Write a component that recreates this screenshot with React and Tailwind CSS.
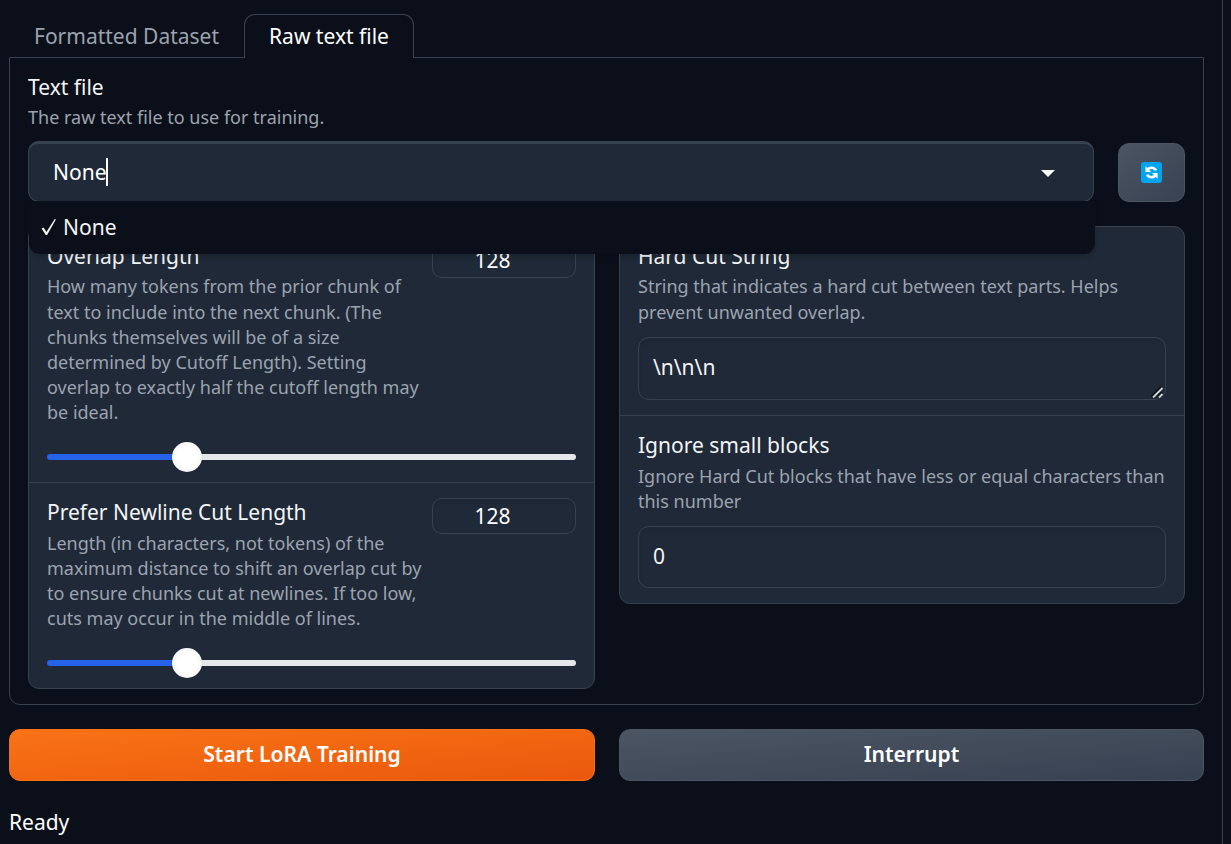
import React from "react";

function Slider() {
  return (
    <div className="flex h-[30px] w-full items-center">
      <div className="h-[6px] w-[130px] rounded-l-full bg-[#2563eb]" />
      <div className="z-10 -mx-[5px] size-[30px] shrink-0 rounded-full bg-[radial-gradient(circle,#ffffff_45%,#ececec_100%)] shadow-[0_0_1px_0px_rgba(0,0,0,0.4)]" />
      <div className="h-[6px] flex-1 rounded-r-full bg-[#e5e7eb]" />
    </div>
  );
}

function SliderBlock({ title, lines, value, className, lineClass = "" }) {
  return (
    <div className={"flex flex-col justify-between px-[18px] " + className}>
      <div className="flex justify-between">
        <div>
          <h3 className="text-[21px] leading-[30px] whitespace-nowrap text-[#f3f4f6]">{title}</h3>
          <p className="mt-[3.5px] text-[18px] leading-[25.1px] whitespace-nowrap text-[#9ca3af]">
            {lines.map((line) => (
              <span key={line} className={"block " + lineClass}>{line}</span>
            ))}
          </p>
        </div>
        <div className="mt-px h-9 w-36 shrink-0 rounded-[10px] border border-[#374151] pr-[23px] text-center text-[21px] leading-[34px] text-white shadow-[inset_0_2px_4px_rgba(0,0,0,0.05)]">
          {value}
        </div>
      </div>
      <Slider />
    </div>
  );
}

function TextBlock({ title, lines, value, resize, className, fieldClass, lineClass = "" }) {
  return (
    <div className={"flex flex-col px-[18px] " + className}>
      <h3 className="text-[21px] leading-[30px] text-[#f3f4f6]">{title}</h3>
      <p className="mt-[3.5px] text-[18px] leading-[25.1px] whitespace-nowrap text-[#9ca3af]">
        {lines.map((line) => (
          <span key={line} className={"block " + lineClass}>{line}</span>
        ))}
      </p>
      <div className={"relative mt-[12.3px] flex items-center rounded-[11px] border border-[#374151] px-[14px] text-[21px] text-[#f3f4f6] shadow-[inset_0_2px_4px_rgba(0,0,0,0.08)] " + fieldClass}>
        {value}
        {resize && (
          <svg className="absolute right-[1px] bottom-[1px]" width="13" height="12" viewBox="0 0 13 12" fill="none">
            <path d="M0.5 10.5 10.5 .5M6.5 10.5 10.5 6.5" stroke="#0b0f19" strokeWidth="1.8" />
            <path d="M2 11.5 11.5 2M8 11.5 11.5 8" stroke="#d1d5db" strokeWidth="1.8" />
          </svg>
        )}
      </div>
    </div>
  );
}

export default function App() {
  return (
    <div className="flex h-[844px] w-[1231px] overflow-hidden bg-[#0b0f19] font-['Noto_Sans',sans-serif]">
      <main className="flex w-[1223px] flex-col border-r border-[#374151] pt-[14px] pr-[18px] pl-[9px]">
        <div className="z-10 -mb-px flex h-11 text-[21px] leading-[44px]">
          <div className="w-[235px] pl-[25px] text-[#9ca3af]">Formatted Dataset</div>
          <div className="w-[170px] rounded-t-[11px] border border-b-0 border-[#374151] bg-[#0b0f19] text-center leading-[42px] text-white">
            Raw text file
          </div>
        </div>
        <section className="flex h-[648px] w-[1195px] flex-col rounded-b-[11px] border border-[#374151] px-[18px] pt-[14px]">
          <h2 className="text-[21px] leading-[30px] text-[#f3f4f6]">Text file</h2>
          <p className="mt-px text-[18px] leading-[28px] text-[#9ca3af]">The raw text file to use for training.</p>
          <div className="mt-[10px] flex h-[61px] items-end justify-between">
            <div className="relative h-[61px] w-[1066px]">
              <div className="flex h-[61px] items-center rounded-[11px] border border-t-[3px] border-[#374151] bg-[#1f2937] pr-[38px] pl-6 text-[21px] text-white">
                <span className="mt-px">None</span>
                <span className="-mt-px -ml-px h-7 w-[2px] bg-white" />
                <svg className="mt-[2px] ml-auto" width="14" height="7" viewBox="0 0 14 7">
                  <path d="M0 0H14L7 7Z" fill="#fff" />
                </svg>
              </div>
              <div className="absolute top-[60px] left-px z-20 flex h-[53px] w-[1066px] items-center rounded-b-[11px] bg-[#0b0f19] pl-3 text-[21px] text-[#f3f4f6] shadow-[0_3px_5px_rgba(0,0,0,0.15)]">
                <svg className="mr-[6px] -mt-px" width="16" height="18" viewBox="0 0 16 18" role="img" aria-label="Selected">
                  <path d="M0.6 10.6 2.6 9.6 5.4 14 13.6 1.2H15L6.1 17H4.7Z" fill="#f3f4f6" />
                </svg>
                <span className="mt-px">None</span>
              </div>
            </div>
            <button className="flex h-[59px] w-[67px] items-center justify-center rounded-[11px] border border-[#4b5563] bg-linear-to-br from-[#4b5563] to-[#374151]">
              <svg width="21" height="21" viewBox="0 0 21 21">
                <rect width="21" height="21" rx="3" fill="#00a4ef" />
                <path d="M4.5 4.2V10H10.2L8.1 7.9C10.3 6.5 12.5 7 13.5 8.8L16.2 8C14.5 4.2 9.6 3.3 6.4 6Z M16.6 16.8V11H10.9L13 13.1C10.8 14.5 8.6 14 7.6 12.2L4.9 13C6.6 16.8 11.5 17.7 14.7 15Z" fill="#fff" />
              </svg>
            </button>
          </div>
          <div className="mt-6 flex items-start gap-6">
            <div className="flex h-[463px] w-[567px] flex-col rounded-[11px] border border-[#374151] bg-[#1f2937]">
              <SliderBlock
                title="Overlap Length"
                value="128"
                lines={["How many tokens from the prior chunk of", "text to include into the next chunk. (The", "chunks themselves will be of a size", "determined by Cutoff Length). Setting", "overlap to exactly half the cutoff length may", "be ideal."]}
                className="h-[255px] pt-[14px] pb-[10px]"
                lineClass="first:-mt-px first:mb-px"
              />
              <SliderBlock
                title="Prefer Newline Cut Length"
                value="128"
                lines={["Length (in characters, not tokens) of the", "maximum distance to shift an overlap cut by", "to ensure chunks cut at newlines. If too low,", "cuts may occur in the middle of lines."]}
                className="flex-1 border-t border-[#374151] pt-[14px] pb-[10px]"
              />
            </div>
            <div className="flex h-[378px] w-[566px] flex-col rounded-[11px] border border-[#374151] bg-[#1f2937]">
              <TextBlock
                title="Hard Cut String"
                value="\n\n\n"
                resize
                lines={["String that indicates a hard cut between text parts. Helps", "prevent unwanted overlap."]}
                className="h-[188px] pt-[14px]"
                fieldClass="h-[63px] pb-[2px]"
                lineClass="first:-mt-px first:mb-px"
              />
              <TextBlock
                title="Ignore small blocks"
                value="0"
                lines={["Ignore Hard Cut blocks that have less or equal characters than", "this number"]}
                className="flex-1 border-t border-[#374151] pt-[14px]"
                fieldClass="h-[62px]"
              />
            </div>
          </div>
        </section>
        <div className="mt-6 flex h-[52px] w-[1195px] gap-6 text-[21.1px] font-semibold text-white">
          <button className="w-[586px] rounded-[11px] border border-[#f97316] bg-linear-to-br from-[#f97316] to-[#ea580c] pb-[2px]">Start LoRA Training</button>
          <button className="w-[585px] rounded-[11px] border border-[#4b5563] bg-linear-to-br from-[#4b5563] to-[#374151] pb-[2px]">Interrupt</button>
        </div>
        <p className="mt-[26px] text-[21px] leading-[30px] text-white">Ready</p>
      </main>
    </div>
  );
}
